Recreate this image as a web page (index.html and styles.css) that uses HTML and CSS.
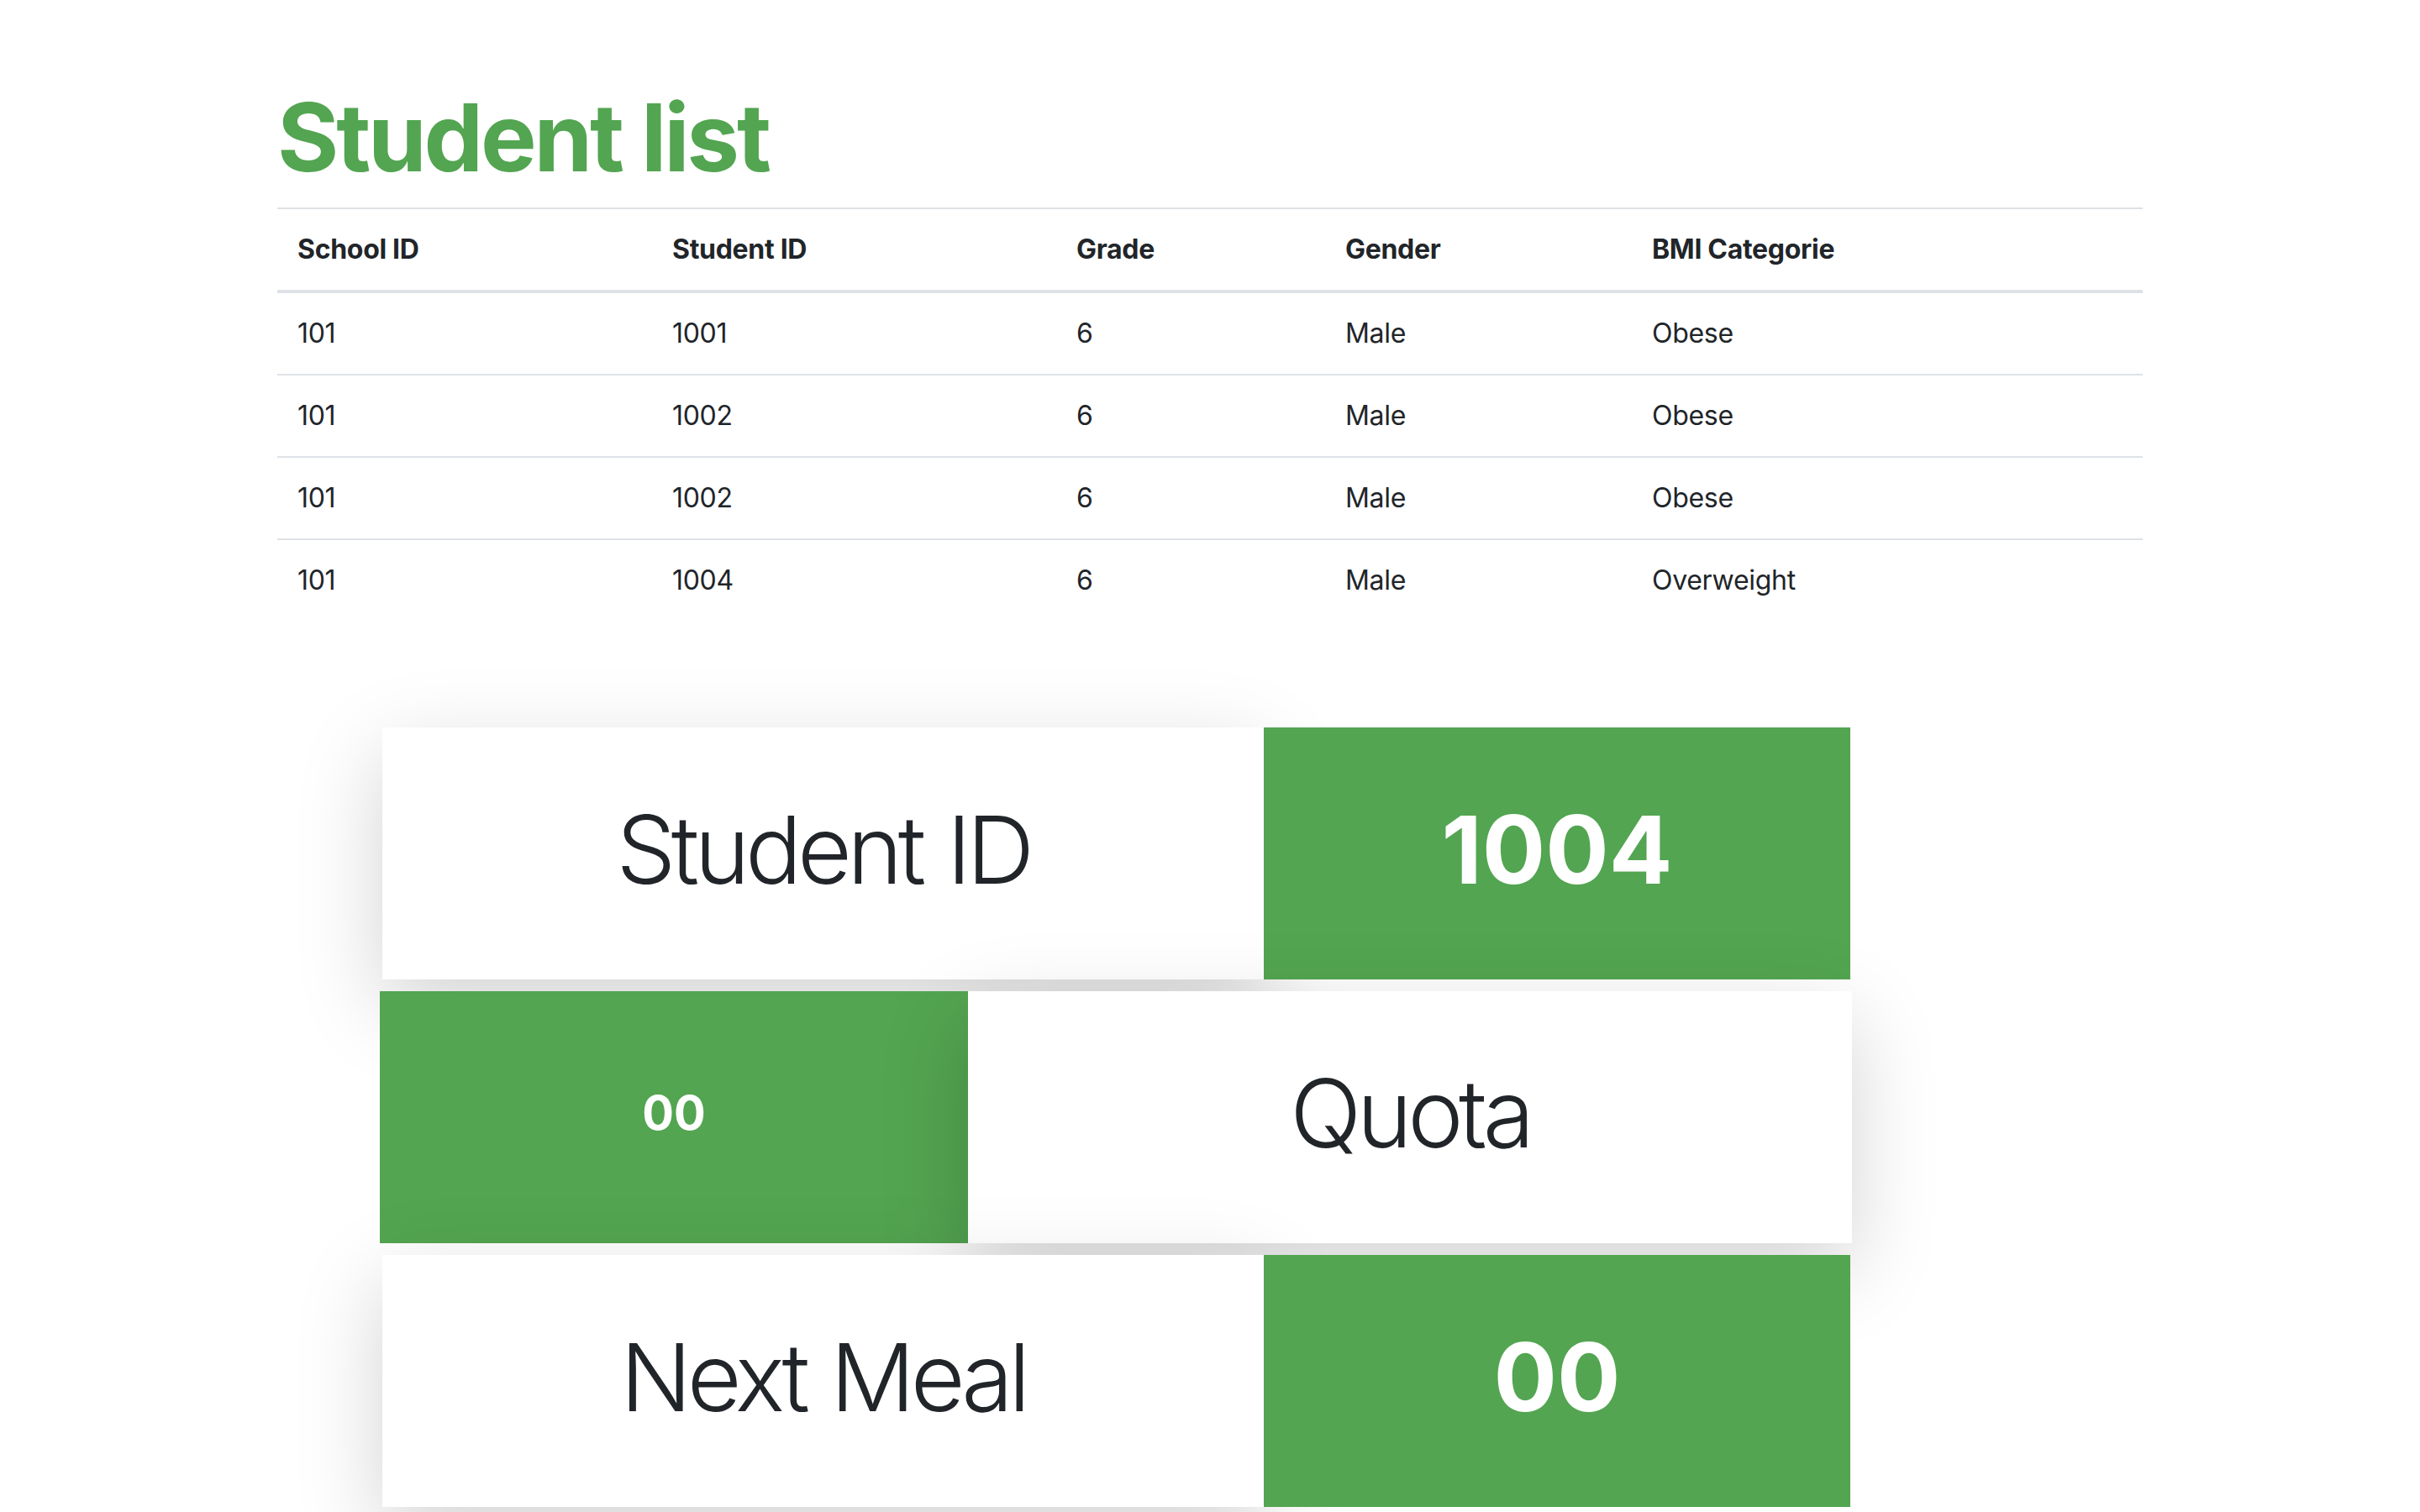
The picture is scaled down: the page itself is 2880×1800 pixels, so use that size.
FILE: index.html
```html
<!DOCTYPE html>
<html lang="en">
<head>
<meta charset="utf-8">
<title>Student list</title>
<link rel="stylesheet" href="styles.css">
</head>
<body>
<div class="page">
  <h1 class="title">Student list</h1>
  <table class="students">
    <colgroup>
      <col class="c1"><col class="c2"><col class="c3"><col class="c4"><col class="c5">
    </colgroup>
    <thead>
      <tr><th>School ID</th><th>Student ID</th><th>Grade</th><th>Gender</th><th>BMI Categorie</th></tr>
    </thead>
    <tbody>
      <tr><td>101</td><td>1001</td><td>6</td><td>Male</td><td>Obese</td></tr>
      <tr><td>101</td><td>1002</td><td>6</td><td>Male</td><td>Obese</td></tr>
      <tr><td>101</td><td>1002</td><td>6</td><td>Male</td><td>Obese</td></tr>
      <tr><td>101</td><td>1004</td><td>6</td><td>Male</td><td>Overweight</td></tr>
    </tbody>
  </table>
</div>

<div class="cards">
  <div class="card-row row-a">
    <div class="cell label">Student ID</div>
    <div class="cell value big">1004</div>
  </div>
  <div class="card-row row-b">
    <div class="cell value small">00</div>
    <div class="cell label">Quota</div>
  </div>
  <div class="card-row row-a">
    <div class="cell label">Next Meal</div>
    <div class="cell value big">00</div>
  </div>
</div>
</body>
</html>
```

FILE: styles.css
```css
html, body {
  margin: 0;
  padding: 0;
  background: #ffffff;
}

body {
  font-family: Inter, "Noto Sans", "Liberation Sans", sans-serif;
  color: #212529;
  padding-bottom: 200px;
}

.page {
  width: 2220px;
  margin-left: 330px;
}

.title {
  margin: 96px 0 17px;
  font-size: 112px;
  line-height: 1.2;
  font-weight: 700;
  color: #53a551;
  letter-spacing: -3.2px;
}

.students {
  width: 100%;
  border-collapse: collapse;
  font-size: 32px;
  line-height: 48px;
  color: #212529;
  letter-spacing: -0.3px;
}

.students .c1 { width: 446px; }
.students .c2 { width: 481px; }
.students .c3 { width: 320px; }
.students .c4 { width: 365px; }
.students .c5 { width: 608px; }

.students th,
.students td {
  padding: 24px;
  text-align: left;
  vertical-align: top;
  border-top: 2px solid #dee2e6;
}

.students th {
  font-weight: 700;
  border-bottom: 4px solid #dee2e6;
}

.cards {
  margin-top: 127px;
  display: flex;
  flex-direction: column;
  gap: 14px;
}

.card-row {
  display: flex;
  height: 300px;
}

.row-a {
  margin-left: 455px;
  width: 1747px;
}

.row-a .label { width: 1049px; }
.row-a .value { width: 698px; }

.row-b {
  margin-left: 452px;
  width: 1752px;
}

.row-b .value { width: 700px; }
.row-b .label { width: 1052px; }

.cell {
  display: flex;
  align-items: center;
  justify-content: center;
  flex: none;
  box-sizing: border-box;
  padding-bottom: 11px;
}

.label {
  background: #ffffff;
  box-shadow: 0 32px 96px rgba(0, 0, 0, 0.175);
  font-size: 112px;
  font-weight: 300;
  color: #212529;
  letter-spacing: -5.5px;
  word-spacing: 4px;
}

.value {
  background: #53a551;
  color: #ffffff;
  font-weight: 700;
}

.value.big {
  font-size: 112px;
}

.value.small {
  font-size: 56px;
}
```
